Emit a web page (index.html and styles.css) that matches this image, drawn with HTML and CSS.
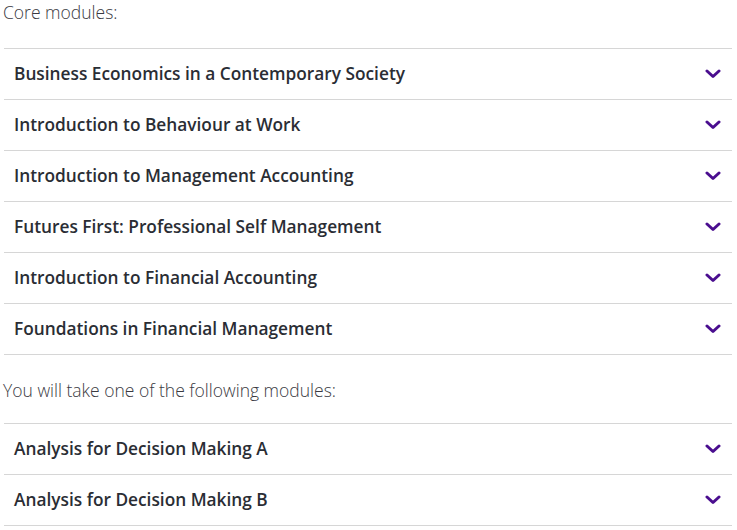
FILE: index.html
```html
<!DOCTYPE html>
<html>
<head>
<meta charset="utf-8">
<link rel="stylesheet" href="styles.css">
</head>
<body>
<div class="page">
  <p class="intro first">Core modules:</p>
  <ul class="modules">
    <li class="module"><span class="title">Business Economics in a Contemporary Society</span><svg class="chev" viewBox="0 0 16 10"><path d="M2 2 L8 7.5 L14 2" fill="none" stroke="currentColor" stroke-width="3" stroke-linecap="round" stroke-linejoin="round"/></svg></li>
    <li class="module"><span class="title">Introduction to Behaviour at Work</span><svg class="chev" viewBox="0 0 16 10"><path d="M2 2 L8 7.5 L14 2" fill="none" stroke="currentColor" stroke-width="3" stroke-linecap="round" stroke-linejoin="round"/></svg></li>
    <li class="module"><span class="title">Introduction to Management Accounting</span><svg class="chev" viewBox="0 0 16 10"><path d="M2 2 L8 7.5 L14 2" fill="none" stroke="currentColor" stroke-width="3" stroke-linecap="round" stroke-linejoin="round"/></svg></li>
    <li class="module"><span class="title">Futures First: Professional Self Management</span><svg class="chev" viewBox="0 0 16 10"><path d="M2 2 L8 7.5 L14 2" fill="none" stroke="currentColor" stroke-width="3" stroke-linecap="round" stroke-linejoin="round"/></svg></li>
    <li class="module"><span class="title">Introduction to Financial Accounting</span><svg class="chev" viewBox="0 0 16 10"><path d="M2 2 L8 7.5 L14 2" fill="none" stroke="currentColor" stroke-width="3" stroke-linecap="round" stroke-linejoin="round"/></svg></li>
    <li class="module"><span class="title">Foundations in Financial Management</span><svg class="chev" viewBox="0 0 16 10"><path d="M2 2 L8 7.5 L14 2" fill="none" stroke="currentColor" stroke-width="3" stroke-linecap="round" stroke-linejoin="round"/></svg></li>
  </ul>
  <p class="intro second">You will take one of the following modules:</p>
  <ul class="modules">
    <li class="module"><span class="title">Analysis for Decision Making A</span><svg class="chev" viewBox="0 0 16 10"><path d="M2 2 L8 7.5 L14 2" fill="none" stroke="currentColor" stroke-width="3" stroke-linecap="round" stroke-linejoin="round"/></svg></li>
    <li class="module"><span class="title">Analysis for Decision Making B</span><svg class="chev" viewBox="0 0 16 10"><path d="M2 2 L8 7.5 L14 2" fill="none" stroke="currentColor" stroke-width="3" stroke-linecap="round" stroke-linejoin="round"/></svg></li>
  </ul>
</div>
</body>
</html>
```
FILE: styles.css
```css
html, body {
  margin: 0;
  padding: 0;
  background: #ffffff;
}
.page {
  padding: 0 5px 0 4px;
  font-family: "Open Sans", "Lato", sans-serif;
}
.intro {
  margin: 0;
  font-size: 17.5px;
  line-height: 24px;
  font-weight: 300;
  color: #3a3a42;
  margin-left: -1px;
}
.intro.first {
  margin-bottom: 24px;
}
.intro.second {
  margin-top: 23px;
  margin-bottom: 21px;
}
.modules {
  list-style: none;
  margin: 0;
  padding: 0;
  border-top: 1px solid #d6d6d6;
}
.module {
  height: 50px;
  border-bottom: 1px solid #d6d6d6;
  display: flex;
  align-items: center;
  justify-content: space-between;
  padding: 0 11px 0 10px;
}
.title {
  font-size: 17.3px;
  font-weight: 600;
  color: #2a2d34;
  position: relative;
  top: -1px;
}
.chev {
  width: 16px;
  height: 10px;
  color: #4a0e8f;
}
```
